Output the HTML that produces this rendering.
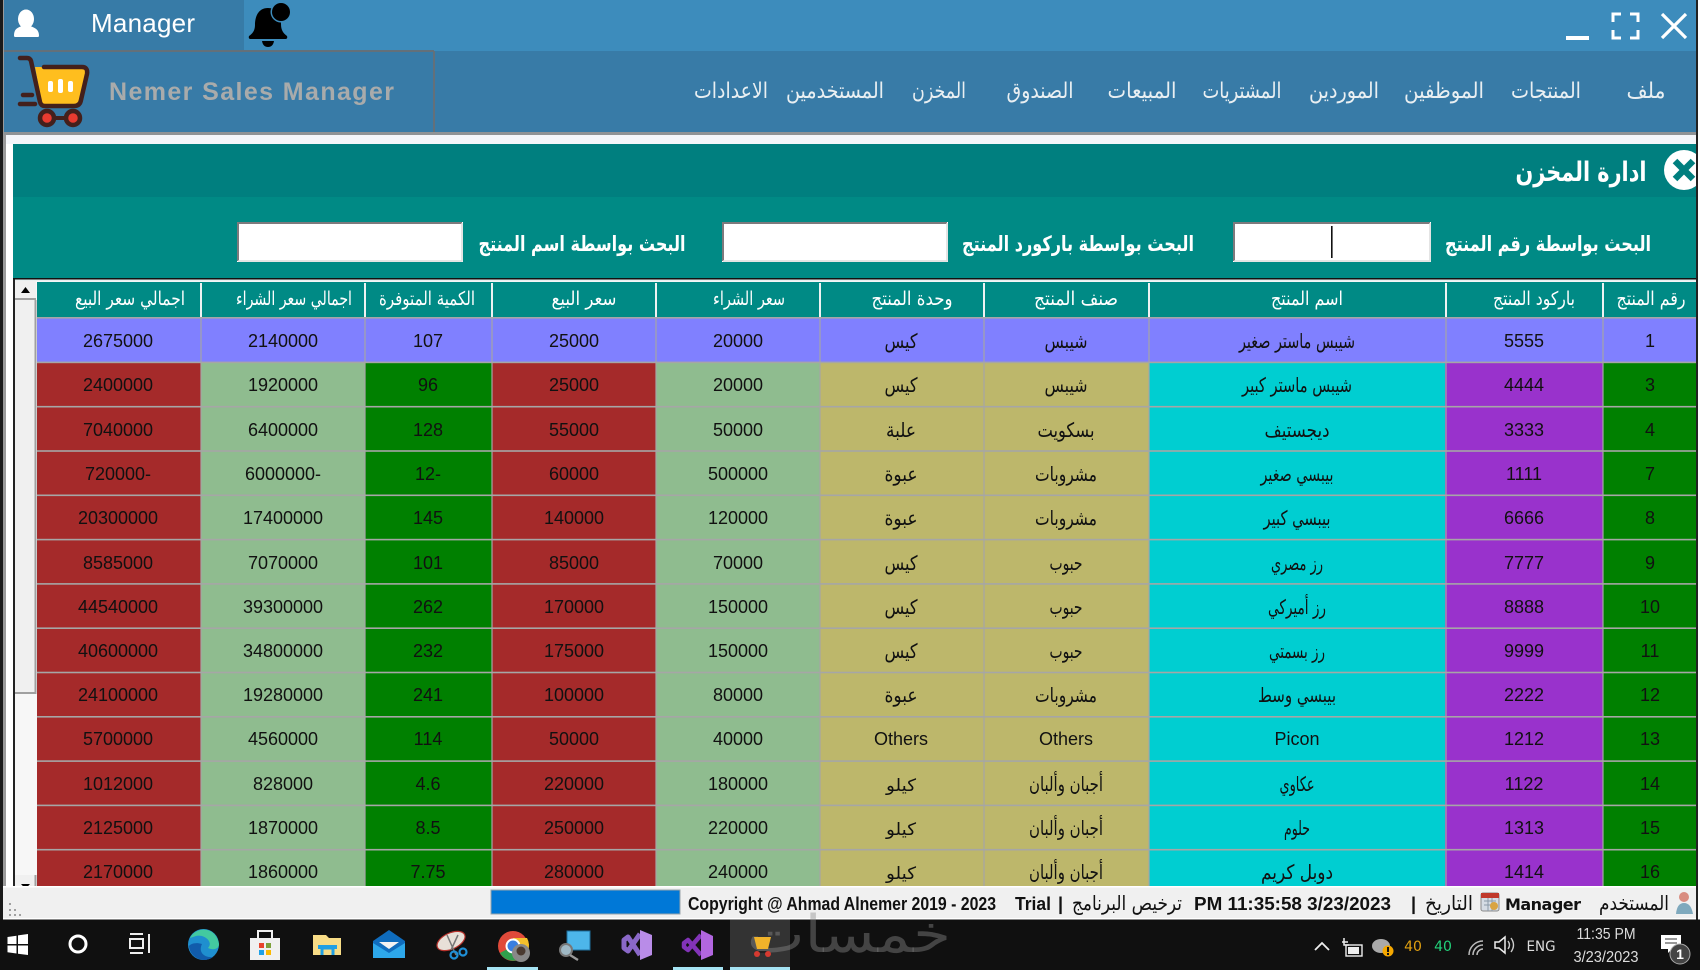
<!DOCTYPE html>
<html lang="ar">
<head>
<meta charset="utf-8">
<title>Nemer Sales Manager</title>
<style>
html,body{margin:0;padding:0;width:1700px;height:970px;overflow:hidden;background:#111}
svg{display:block;filter:blur(.3px)}
text{font-family:"Liberation Sans","DejaVu Sans",sans-serif}
.ar{font-family:"DejaVu Sans",sans-serif;text-anchor:middle}
.m{font-size:22px;fill:#e9eff2}
.l{font-size:21px;fill:#fff;font-weight:bold}
.h{font-size:19px;fill:#fff}
.c{font-size:20px;fill:#111}
.k{font-size:18px}
.d{font-size:18px;fill:#111;text-anchor:middle}
.s{font-size:18px;fill:#111;font-weight:bold}
.t{font-size:16px;fill:#ddd;text-anchor:middle}
</style>
</head>
<body>
<svg xmlns="http://www.w3.org/2000/svg" width="1700" height="970" viewBox="0 0 1700 970">
<!-- window base -->
<rect width="1700" height="970" fill="#fff"/>
<rect x="0" y="0" width="3" height="970" fill="#1a1a1a"/>
<rect x="3" y="0" width="3" height="970" fill="#9a9a9a"/>
<rect x="1696" y="0" width="2" height="970" fill="#222"/>
<!-- top bar -->
<rect x="6" y="0" width="1690" height="51" fill="#3d8cbc"/>
<rect x="4" y="0" width="240" height="50" fill="#377ba7"/>
<rect x="4" y="51" width="1692" height="82" fill="#387ba7"/>
<rect x="4" y="50" width="430" height="2" fill="#63707a"/>
<rect x="433" y="51" width="2" height="82" fill="#63707a"/>
<rect x="4" y="132" width="1692" height="3" fill="#8f9396"/>
<rect x="6" y="135" width="1690" height="9" fill="#f4f6fa"/>
<!-- user icon -->
<g fill="#fff">
<ellipse cx="26" cy="19" rx="8" ry="9.5"/>
<path d="M14 36 C14 30 16 28 22 26 L24 24 H28 L30 26 C36 28 39 30 39 36 Q39 37 37 37 H16 Q14 37 14 36 Z"/>
</g>
<text x="91" y="32" font-size="26" fill="#fff" textLength="104" lengthAdjust="spacing" style="font-family:'Liberation Sans',sans-serif">Manager</text>
<!-- bell -->
<path d="M268 8 C258 8 255 17 255 25 C255 31 252 34 249 36 Q248 39 251 39 H285 Q288 39 287 36 C283 33 281 30 281 24 C281 14 276 8 268 8 Z" fill="#000"/>
<path d="M262 41 H274 Q273 47 268 47 Q263 47 262 41 Z" fill="#000"/>
<circle cx="281" cy="12" r="10.5" fill="#3d8cbc"/>
<circle cx="281" cy="12" r="9" fill="#000"/>
<!-- window controls -->
<rect x="1566" y="36" width="23" height="4" fill="#fff"/>
<path d="M1613 22 V14 H1621 M1630 14 H1638 V22 M1638 30 V38 H1630 M1621 38 H1613 V30" fill="none" stroke="#fff" stroke-width="3"/>
<path d="M1662 14 L1686 38 M1686 14 L1662 38" stroke="#fff" stroke-width="3.2" fill="none"/>
<!-- cart logo -->
<path d="M35 67 H82 Q88 67 87 73 L81 99 Q80 105 74 105 H42 Z" fill="#ffbe1e"/>
<path d="M20 58 H27 Q30 58 31 61 L40 102 Q41 106 45 106 H74 Q80 106 81 100 L87 74 Q88 67 82 67 H44" fill="none" stroke="#43201c" stroke-width="4.5" stroke-linecap="round"/>
<path d="M23 95 H32 M20 104 H35" stroke="#43201c" stroke-width="4.5" stroke-linecap="round"/>
<path d="M47 118 H73" stroke="#43201c" stroke-width="4"/>
<circle cx="47" cy="118" r="7" fill="#e83b30" stroke="#43201c" stroke-width="4.5"/>
<circle cx="73" cy="118" r="7" fill="#e83b30" stroke="#43201c" stroke-width="4.5"/>
<rect x="48" y="81" width="5" height="11" rx="2" fill="#fff"/>
<rect x="58" y="79" width="5" height="14" rx="2" fill="#fff"/>
<rect x="68" y="81" width="5" height="11" rx="2" fill="#fff"/>
<text x="109" y="100" font-size="25" font-weight="bold" fill="#a9abab" textLength="285" lengthAdjust="spacing">Nemer Sales Manager</text>
<!-- menu -->
<g>
<text class="ar m" x="1646" y="98" textLength="39" lengthAdjust="spacingAndGlyphs">ملف</text>
<text class="ar m" x="1546" y="98" textLength="70" lengthAdjust="spacingAndGlyphs">المنتجات</text>
<text class="ar m" x="1444" y="98" textLength="80" lengthAdjust="spacingAndGlyphs">الموظفين</text>
<text class="ar m" x="1344" y="98" textLength="70" lengthAdjust="spacingAndGlyphs">الموردين</text>
<text class="ar m" x="1242" y="98" textLength="79" lengthAdjust="spacingAndGlyphs">المشتريات</text>
<text class="ar m" x="1142" y="98" textLength="69" lengthAdjust="spacingAndGlyphs">المبيعات</text>
<text class="ar m" x="1040" y="98" textLength="67" lengthAdjust="spacingAndGlyphs">الصندوق</text>
<text class="ar m" x="939" y="98" textLength="54" lengthAdjust="spacingAndGlyphs">المخزن</text>
<text class="ar m" x="835" y="98" textLength="98" lengthAdjust="spacingAndGlyphs">المستخدمين</text>
<text class="ar m" x="731" y="98" textLength="74" lengthAdjust="spacingAndGlyphs">الاعدادات</text>
</g>
<!-- teal panel -->
<rect x="13" y="144" width="1683" height="53" fill="#007f7f"/>
<rect x="13" y="197" width="1683" height="81" fill="#008a85"/>
<text class="ar" x="1581" y="181" font-size="27" font-weight="bold" fill="#fff" textLength="131" lengthAdjust="spacingAndGlyphs">ادارة المخزن</text>
<circle cx="1684" cy="170" r="20" fill="#fff"/>
<path d="M1675 161 L1693 179 M1693 161 L1675 179" stroke="#007f7f" stroke-width="6.5"/>
<rect x="1696" y="144" width="4" height="60" fill="#fff"/>
<rect x="1696" y="144" width="2" height="60" fill="#222"/>
<!-- search -->
<g>
<rect x="237" y="222" width="226" height="40" fill="#fff"/>
<path d="M238 261 V223 H462" fill="none" stroke="#7d7a7d" stroke-width="2"/>
<path d="M238 261 H462 V223" fill="none" stroke="#dcdcdc" stroke-width="1.5"/>
<rect x="722" y="222" width="226" height="40" fill="#fff"/>
<path d="M723 261 V223 H947" fill="none" stroke="#7d7a7d" stroke-width="2"/>
<path d="M723 261 H947 V223" fill="none" stroke="#dcdcdc" stroke-width="1.5"/>
<rect x="1233" y="222" width="198" height="40" fill="#fff"/>
<path d="M1234 261 V223 H1430" fill="none" stroke="#7d7a7d" stroke-width="2"/>
<path d="M1234 261 H1430 V223" fill="none" stroke="#dcdcdc" stroke-width="1.5"/>
<rect x="1331" y="226" width="1.6" height="32" fill="#111"/>
</g>
<text class="ar l" x="1548" y="251" textLength="206" lengthAdjust="spacingAndGlyphs">البحث بواسطة رقم المنتج</text>
<text class="ar l" x="1078" y="251" textLength="232" lengthAdjust="spacingAndGlyphs">البحث بواسطة باركورد المنتج</text>
<text class="ar l" x="582" y="251" textLength="207" lengthAdjust="spacingAndGlyphs">البحث بواسطة اسم المنتج</text>
<!-- grid frame -->
<rect x="13" y="278" width="1683" height="1.6" fill="#111"/>
<rect x="13" y="279.6" width="1683" height="2" fill="#e9efef"/>
<rect x="6" y="278" width="7" height="610" fill="#fff"/>
<rect x="13" y="279" width="2" height="608" fill="#222"/>
<!-- scrollbar -->
<rect x="15" y="281" width="22" height="606" fill="#f7f7f7"/>
<rect x="15" y="281" width="21" height="18" fill="#f0f0f0"/>
<rect x="15" y="298" width="21" height="2" fill="#a0a0a0"/>
<path d="M21 293 L25.5 287 L30 293 Z" fill="#000"/>
<rect x="15" y="300" width="21" height="393" fill="#f0f0f0"/>
<rect x="34.5" y="300" width="2" height="394" fill="#a0a0a0"/>
<rect x="15" y="692" width="21.5" height="2" fill="#a0a0a0"/>
<rect x="15" y="875" width="21" height="12" fill="#f0f0f0"/>
<rect x="34.5" y="875" width="2" height="12" fill="#a0a0a0"/>
<path d="M21 884 L30 884 L25.5 889 Z" fill="#000"/>
<!-- header -->
<rect x="37" y="282" width="1659" height="36" fill="#008a85"/>
<g fill="#eef2f2">
<rect x="200" y="283" width="2" height="34"/><rect x="364" y="283" width="2" height="34"/>
<rect x="491" y="283" width="2" height="34"/><rect x="655" y="283" width="2" height="34"/>
<rect x="819" y="283" width="2" height="34"/><rect x="983" y="283" width="2" height="34"/>
<rect x="1148" y="283" width="2" height="34"/><rect x="1445" y="283" width="2" height="34"/>
<rect x="1602" y="283" width="2" height="34"/>
</g>
<text class="ar h" x="130" y="305" textLength="110" lengthAdjust="spacingAndGlyphs">اجمالي سعر البيع</text>
<text class="ar h" x="294" y="305" textLength="116" lengthAdjust="spacingAndGlyphs">اجمالي سعر الشراء</text>
<text class="ar h" x="427" y="305" textLength="96" lengthAdjust="spacingAndGlyphs">الكمية المتوفرة</text>
<text class="ar h" x="584" y="305" textLength="65" lengthAdjust="spacingAndGlyphs">سعر البيع</text>
<text class="ar h" x="749" y="305" textLength="72" lengthAdjust="spacingAndGlyphs">سعر الشراء</text>
<text class="ar h" x="912" y="305" textLength="81" lengthAdjust="spacingAndGlyphs">وحدة المنتج</text>
<text class="ar h" x="1076" y="305" textLength="84" lengthAdjust="spacingAndGlyphs">صنف المنتج</text>
<text class="ar h" x="1307" y="305" textLength="72" lengthAdjust="spacingAndGlyphs">اسم المنتج</text>
<text class="ar h" x="1534" y="305" textLength="82" lengthAdjust="spacingAndGlyphs">باركود المنتج</text>
<text class="ar h" x="1651" y="305" textLength="69" lengthAdjust="spacingAndGlyphs">رقم المنتج</text>
<!-- columns -->
<rect x="37" y="318" width="1659" height="44" fill="#8080ff"/>
<rect x="37" y="362" width="164" height="525" fill="#a52a2a"/>
<rect x="201" y="362" width="164" height="525" fill="#8fbc8f"/>
<rect x="365" y="362" width="127" height="525" fill="#008000"/>
<rect x="492" y="362" width="164" height="525" fill="#a52a2a"/>
<rect x="656" y="362" width="164" height="525" fill="#8fbc8f"/>
<rect x="820" y="362" width="329" height="525" fill="#bdb76b"/>
<rect x="1149" y="362" width="296" height="525" fill="#00ced1"/>
<rect x="1445" y="362" width="158" height="525" fill="#9932cc"/>
<rect x="1603" y="362" width="93" height="525" fill="#008000"/>
<!-- grid lines -->
<g fill="#a6a6a6">
<rect x="37" y="317" width="1659" height="1.6"/><rect x="37" y="361.6" width="1659" height="1.6"/>
<rect x="37" y="405.9" width="1659" height="1.6"/><rect x="37" y="450.2" width="1659" height="1.6"/>
<rect x="37" y="494.5" width="1659" height="1.6"/><rect x="37" y="538.8" width="1659" height="1.6"/>
<rect x="37" y="583.1" width="1659" height="1.6"/><rect x="37" y="627.4" width="1659" height="1.6"/>
<rect x="37" y="671.7" width="1659" height="1.6"/><rect x="37" y="716" width="1659" height="1.6"/>
<rect x="37" y="760.3" width="1659" height="1.6"/><rect x="37" y="804.6" width="1659" height="1.6"/>
<rect x="37" y="848.9" width="1659" height="1.6"/>
<rect x="200.4" y="318" width="1.2" height="569"/><rect x="364.4" y="318" width="1.2" height="569"/>
<rect x="491.4" y="318" width="1.2" height="569"/><rect x="655.4" y="318" width="1.2" height="569"/>
<rect x="819.4" y="318" width="1.2" height="569"/><rect x="983.4" y="318" width="1.2" height="569"/>
<rect x="1148.4" y="318" width="1.2" height="569"/><rect x="1445.4" y="318" width="1.2" height="569"/>
<rect x="1602.4" y="318" width="1.2" height="569"/>
</g>
<!-- rows -->
<g>
<text class="d" x="1650" y="347">1</text><text class="d" x="1524" y="347">5555</text>
<text class="ar c" x="1297" y="348" textLength="116" lengthAdjust="spacingAndGlyphs">شيبس ماستر صغير</text>
<text class="ar c" x="1066" y="348" textLength="43" lengthAdjust="spacingAndGlyphs">شيبس</text>
<text class="ar c" x="901" y="348" textLength="33" lengthAdjust="spacingAndGlyphs">كيس</text>
<text class="d" x="738" y="347">20000</text><text class="d" x="574" y="347">25000</text><text class="d" x="428" y="347">107</text>
<text class="d" x="283" y="347">2140000</text><text class="d" x="118" y="347">2675000</text>
</g>
<g>
<text class="d" x="1650" y="391">3</text><text class="d" x="1524" y="391">4444</text>
<text class="ar c" x="1297" y="392" textLength="110" lengthAdjust="spacingAndGlyphs">شيبس ماستر كبير</text>
<text class="ar c" x="1066" y="392" textLength="43" lengthAdjust="spacingAndGlyphs">شيبس</text>
<text class="ar c" x="901" y="392" textLength="33" lengthAdjust="spacingAndGlyphs">كيس</text>
<text class="d" x="738" y="391">20000</text><text class="d" x="574" y="391">25000</text><text class="d" x="428" y="391">96</text>
<text class="d" x="283" y="391">1920000</text><text class="d" x="118" y="391">2400000</text>
</g>
<g>
<text class="d" x="1650" y="436">4</text><text class="d" x="1524" y="436">3333</text>
<text class="ar c" x="1297" y="437" textLength="65" lengthAdjust="spacingAndGlyphs">ديجستيف</text>
<text class="ar c" x="1066" y="437" textLength="57" lengthAdjust="spacingAndGlyphs">بسكويت</text>
<text class="ar c" x="901" y="437" textLength="30" lengthAdjust="spacingAndGlyphs">علبة</text>
<text class="d" x="738" y="436">50000</text><text class="d" x="574" y="436">55000</text><text class="d" x="428" y="436">128</text>
<text class="d" x="283" y="436">6400000</text><text class="d" x="118" y="436">7040000</text>
</g>
<g>
<text class="d" x="1650" y="480">7</text><text class="d" x="1524" y="480">1111</text>
<text class="ar c" x="1297" y="481" textLength="73" lengthAdjust="spacingAndGlyphs">بيبسي صغير</text>
<text class="ar c" x="1066" y="481" textLength="62" lengthAdjust="spacingAndGlyphs">مشروبات</text>
<text class="ar c" x="901" y="481" textLength="33" lengthAdjust="spacingAndGlyphs">عبوة</text>
<text class="d" x="738" y="480">500000</text><text class="d" x="574" y="480">60000</text><text class="d" x="428" y="480">12-</text>
<text class="d" x="283" y="480">6000000-</text><text class="d" x="118" y="480">720000-</text>
</g>
<g>
<text class="d" x="1650" y="524">8</text><text class="d" x="1524" y="524">6666</text>
<text class="ar c" x="1297" y="525" textLength="67" lengthAdjust="spacingAndGlyphs">بيبسي كبير</text>
<text class="ar c" x="1066" y="525" textLength="62" lengthAdjust="spacingAndGlyphs">مشروبات</text>
<text class="ar c" x="901" y="525" textLength="33" lengthAdjust="spacingAndGlyphs">عبوة</text>
<text class="d" x="738" y="524">120000</text><text class="d" x="574" y="524">140000</text><text class="d" x="428" y="524">145</text>
<text class="d" x="283" y="524">17400000</text><text class="d" x="118" y="524">20300000</text>
</g>
<g>
<text class="d" x="1650" y="569">9</text><text class="d" x="1524" y="569">7777</text>
<text class="ar c" x="1297" y="570" textLength="52" lengthAdjust="spacingAndGlyphs">رز مصري</text>
<text class="ar c" x="1066" y="570" textLength="33" lengthAdjust="spacingAndGlyphs">حبوب</text>
<text class="ar c" x="901" y="570" textLength="33" lengthAdjust="spacingAndGlyphs">كيس</text>
<text class="d" x="738" y="569">70000</text><text class="d" x="574" y="569">85000</text><text class="d" x="428" y="569">101</text>
<text class="d" x="283" y="569">7070000</text><text class="d" x="118" y="569">8585000</text>
</g>
<g>
<text class="d" x="1650" y="613">10</text><text class="d" x="1524" y="613">8888</text>
<text class="ar c" x="1297" y="614" textLength="58" lengthAdjust="spacingAndGlyphs">رز أميركي</text>
<text class="ar c" x="1066" y="614" textLength="33" lengthAdjust="spacingAndGlyphs">حبوب</text>
<text class="ar c" x="901" y="614" textLength="33" lengthAdjust="spacingAndGlyphs">كيس</text>
<text class="d" x="738" y="613">150000</text><text class="d" x="574" y="613">170000</text><text class="d" x="428" y="613">262</text>
<text class="d" x="283" y="613">39300000</text><text class="d" x="118" y="613">44540000</text>
</g>
<g>
<text class="d" x="1650" y="657">11</text><text class="d" x="1524" y="657">9999</text>
<text class="ar c" x="1297" y="658" textLength="56" lengthAdjust="spacingAndGlyphs">رز بسمتي</text>
<text class="ar c" x="1066" y="658" textLength="33" lengthAdjust="spacingAndGlyphs">حبوب</text>
<text class="ar c" x="901" y="658" textLength="33" lengthAdjust="spacingAndGlyphs">كيس</text>
<text class="d" x="738" y="657">150000</text><text class="d" x="574" y="657">175000</text><text class="d" x="428" y="657">232</text>
<text class="d" x="283" y="657">34800000</text><text class="d" x="118" y="657">40600000</text>
</g>
<g>
<text class="d" x="1650" y="701">12</text><text class="d" x="1524" y="701">2222</text>
<text class="ar c" x="1297" y="702" textLength="78" lengthAdjust="spacingAndGlyphs">بيبسي وسط</text>
<text class="ar c" x="1066" y="702" textLength="62" lengthAdjust="spacingAndGlyphs">مشروبات</text>
<text class="ar c" x="901" y="702" textLength="33" lengthAdjust="spacingAndGlyphs">عبوة</text>
<text class="d" x="738" y="701">80000</text><text class="d" x="574" y="701">100000</text><text class="d" x="428" y="701">241</text>
<text class="d" x="283" y="701">19280000</text><text class="d" x="118" y="701">24100000</text>
</g>
<g>
<text class="d" x="1650" y="745">13</text><text class="d" x="1524" y="745">1212</text>
<text class="d" x="1297" y="745">Picon</text>
<text class="d" x="1066" y="745">Others</text>
<text class="d" x="901" y="745">Others</text>
<text class="d" x="738" y="745">40000</text><text class="d" x="574" y="745">50000</text><text class="d" x="428" y="745">114</text>
<text class="d" x="283" y="745">4560000</text><text class="d" x="118" y="745">5700000</text>
</g>
<g>
<text class="d" x="1650" y="790">14</text><text class="d" x="1524" y="790">1122</text>
<text class="ar c" x="1297" y="791" textLength="35" lengthAdjust="spacingAndGlyphs">عكاوي</text>
<text class="ar c" x="1066" y="791" textLength="74" lengthAdjust="spacingAndGlyphs">أجبان وألبان</text>
<text class="ar c k" x="901" y="791" textLength="30" lengthAdjust="spacingAndGlyphs" style="font-size:17px">كيلو</text>
<text class="d" x="738" y="790">180000</text><text class="d" x="574" y="790">220000</text><text class="d" x="428" y="790">4.6</text>
<text class="d" x="283" y="790">828000</text><text class="d" x="118" y="790">1012000</text>
</g>
<g>
<text class="d" x="1650" y="834">15</text><text class="d" x="1524" y="834">1313</text>
<text class="ar c" x="1297" y="835" textLength="26" lengthAdjust="spacingAndGlyphs">حلوم</text>
<text class="ar c" x="1066" y="835" textLength="74" lengthAdjust="spacingAndGlyphs">أجبان وألبان</text>
<text class="ar c k" x="901" y="835" textLength="30" lengthAdjust="spacingAndGlyphs" style="font-size:17px">كيلو</text>
<text class="d" x="738" y="834">220000</text><text class="d" x="574" y="834">250000</text><text class="d" x="428" y="834">8.5</text>
<text class="d" x="283" y="834">1870000</text><text class="d" x="118" y="834">2125000</text>
</g>
<g>
<text class="d" x="1650" y="878">16</text><text class="d" x="1524" y="878">1414</text>
<text class="ar c" x="1297" y="879" textLength="72" lengthAdjust="spacingAndGlyphs">دوبل كريم</text>
<text class="ar c" x="1066" y="879" textLength="74" lengthAdjust="spacingAndGlyphs">أجبان وألبان</text>
<text class="ar c k" x="901" y="879" textLength="30" lengthAdjust="spacingAndGlyphs" style="font-size:17px">كيلو</text>
<text class="d" x="738" y="878">240000</text><text class="d" x="574" y="878">280000</text><text class="d" x="428" y="878">7.75</text>
<text class="d" x="283" y="878">1860000</text><text class="d" x="118" y="878">2170000</text>
</g>
<!-- status bar -->
<rect x="3" y="887" width="1693" height="32" fill="#f0f0f0"/>
<rect x="3" y="886" width="1693" height="1.5" fill="#fff"/>
<rect x="3" y="918" width="1693" height="1.5" fill="#fff"/>
<g fill="#a0a0a0">
<rect x="9" y="903" width="2" height="2"/><rect x="9" y="909" width="2" height="2"/><rect x="14" y="909" width="2" height="2"/>
<rect x="9" y="914" width="2" height="2"/><rect x="14" y="914" width="2" height="2"/><rect x="19" y="914" width="2" height="2"/>
</g>
<rect x="491" y="890" width="189" height="24" fill="#0078d7" stroke="#9aa4aa" stroke-width="1"/>
<text class="s" x="688" y="910" textLength="308" lengthAdjust="spacingAndGlyphs">Copyright @ Ahmad Alnemer 2019 - 2023</text>
<text class="s" x="1015" y="910" textLength="36" lengthAdjust="spacingAndGlyphs">Trial</text>
<text class="s" x="1058" y="910">|</text>
<text class="ar s" x="1127" y="910" textLength="110" lengthAdjust="spacingAndGlyphs" style="font-weight:normal;font-size:20px">ترخيص البرنامج</text>
<text class="s" x="1194" y="910" textLength="197" lengthAdjust="spacingAndGlyphs">PM 11:35:58 3/23/2023</text>
<text class="s" x="1411" y="910">|</text>
<text class="ar s" x="1449" y="910" textLength="48" lengthAdjust="spacingAndGlyphs" style="font-weight:normal;font-size:20px">التاريخ</text>
<g>
<rect x="1481" y="893" width="18" height="18" rx="2" fill="#d5dce4" stroke="#8a8a8a"/>
<rect x="1481" y="893" width="18" height="5" fill="#c0392b"/>
<path d="M1484 901 H1496 M1484 905 H1496 M1488 898 V911 M1492 898 V911" stroke="#8a9aa8" stroke-width="1"/>
<circle cx="1494" cy="906" r="4" fill="#d9a441"/>
</g>
<text class="s" x="1505" y="910" textLength="76" lengthAdjust="spacing" style="font-family:'DejaVu Sans',sans-serif;font-size:16px">Manager</text>
<text class="ar s" x="1634" y="910" textLength="70" lengthAdjust="spacingAndGlyphs" style="font-weight:normal;font-size:20px">المستخدم</text>
<g>
<circle cx="1684" cy="897" r="5" fill="#d98c80"/>
<path d="M1676 914 Q1677 903 1684 903 Q1691 903 1693 914 Z" fill="#7fa9bd"/>
</g>
<!-- taskbar -->
<rect x="0" y="919.5" width="1700" height="50.5" fill="#101010"/>
<rect x="730" y="919.5" width="60" height="50.5" fill="#333"/>
<rect x="487" y="967" width="51" height="3" fill="#a5e3f3"/>
<rect x="673" y="967" width="50" height="3" fill="#a5e3f3"/>
<rect x="730" y="967" width="60" height="3" fill="#a5e3f3"/>
<!-- start -->
<path d="M7.5 937 L16.5 935.7 V944 H7.5 Z M18 935.4 L28 934 V944 H18 Z M7.5 945.5 H16.5 V953.5 L7.5 952.3 Z M18 945.5 H28 V955 L18 953.7 Z" fill="#fff"/>
<circle cx="78" cy="944" r="8" fill="none" stroke="#fff" stroke-width="3"/>
<path d="M130 934 H143 M130 953 H143 M130 939 H143 V948 H130 Z M149 934 V953" fill="none" stroke="#eee" stroke-width="2"/>
<!-- edge -->
<circle cx="203.5" cy="944.5" r="15.5" fill="#1f8fcf"/>
<path d="M190 938 C196 926 216 926 219 944 C219 950 212 950 208 948 C214 942 204 934 196 936 Z" fill="#43c9a0"/>
<path d="M189 946 C190 958 204 964 213 957 C204 958 198 952 202 944 C195 942 191 944 189 946 Z" fill="#115cab"/>
<!-- store -->
<rect x="250" y="938" width="30" height="22" fill="#f0f0f0"/>
<path d="M258 938 V931 H272 V938" fill="none" stroke="#f0f0f0" stroke-width="2"/>
<rect x="259" y="943" width="5" height="5" fill="#e8442c"/><rect x="266" y="943" width="5" height="5" fill="#7da13b"/>
<rect x="259" y="950" width="5" height="5" fill="#1ea0e6"/><rect x="266" y="950" width="5" height="5" fill="#fbb900"/>
<!-- explorer -->
<path d="M313 935 H326 L329 938 H341 V955 H313 Z" fill="#f7dc86"/>
<path d="M322 955 V948 H333 V955" fill="none" stroke="#1f9fe3" stroke-width="3"/>
<rect x="318" y="945" width="19" height="4" fill="#1f9fe3"/>
<!-- mail -->
<path d="M373 941 L389 930 L405 941 V958 H373 Z" fill="#0f6cbd"/>
<path d="M373 943 L389 953 L405 943 V958 H373 Z" fill="#2da7ea"/>
<path d="M379 942 H399 L389 949 Z" fill="#f2f2f2"/>
<!-- snip -->
<ellipse cx="451" cy="941" rx="15" ry="8" transform="rotate(-25 451 941)" fill="#e8e0d8" stroke="#b6322c" stroke-width="1.2"/>
<path d="M447 935 L456 955 M458 935 L451 950" stroke="#777" stroke-width="1.5"/>
<circle cx="454" cy="955" r="3.5" fill="none" stroke="#1f8fd6" stroke-width="2.2"/>
<circle cx="463" cy="952" r="3.5" fill="none" stroke="#1f8fd6" stroke-width="2.2"/>
<!-- chrome -->
<circle cx="513" cy="946" r="15" fill="#e04a3a"/>
<path d="M513 946 L500 953 A15 15 0 0 0 518 960 Z" fill="#2f9f4c"/>
<path d="M513 938 H527 A15 15 0 0 1 518 960 Z" fill="#f5c02c"/>
<circle cx="513" cy="946" r="6.5" fill="#3a7fe0" stroke="#fff" stroke-width="2"/>
<circle cx="521" cy="953" r="9" fill="#888"/>
<circle cx="521" cy="951" r="4.5" fill="#4a3a30"/>
<!-- connect -->
<rect x="567" y="931" width="23" height="19" fill="#4db6ea" stroke="#1e6f9e"/>
<circle cx="566" cy="950" r="6" fill="#9fb8c4" stroke="#777" stroke-width="2"/>
<path d="M570 955 L578 960" stroke="#999" stroke-width="2.4"/>
<!-- VS -->
<path d="M640 934 L628 951 L624 948 V940 L628 937 L640 955" fill="none" stroke="#8a68c8" stroke-width="5" stroke-linejoin="round"/>
<path d="M640 930 L652 935 V955 L640 960 Z" fill="#b98ce8"/>
<path d="M701 935 L688 950 L684 947 V943 L688 940 L701 955" fill="none" stroke="#8233b8" stroke-width="4.5" stroke-linejoin="round"/>
<path d="M701 930 L713 936 V955 L701 960 Z" fill="#b266e0"/>
<!-- watermark -->
<text class="ar" x="849" y="952" font-size="52" fill="#8c8c8c" fill-opacity=".42" textLength="204" lengthAdjust="spacingAndGlyphs">خمسات</text>
<!-- mini cart -->
<path d="M754 937 H771 L768 949 H757 Z" fill="#f0b32a"/>
<path d="M757 952 H768" stroke="#222" stroke-width="2"/>
<circle cx="757" cy="954" r="3" fill="#d63a30"/><circle cx="768" cy="954" r="3" fill="#d63a30"/>
<!-- tray -->
<path d="M1315 950 L1322 943 L1329 950" fill="none" stroke="#eee" stroke-width="1.8"/>
<rect x="1346" y="945" width="16" height="11" fill="#111" stroke="#eee" stroke-width="1.4"/>
<rect x="1348" y="947" width="11" height="7" fill="#eee"/>
<path d="M1344 938 V945 H1349 M1342 942 H1348" stroke="#eee" stroke-width="1.5" fill="none"/>
<ellipse cx="1381" cy="946" rx="9" ry="7" fill="#aaa"/>
<circle cx="1388" cy="951" r="5.5" fill="#f5a800"/>
<rect x="1387" y="947" width="2" height="5" fill="#111"/><rect x="1387" y="953" width="2" height="2" fill="#111"/>
<text x="1413" y="951" font-size="14" fill="#e0a010" text-anchor="middle" style="font-family:'DejaVu Sans',sans-serif">40</text>
<text x="1443" y="951" font-size="14" fill="#22d27a" text-anchor="middle" style="font-family:'DejaVu Sans',sans-serif">40</text>
<g fill="none" stroke="#bbb" stroke-width="1.5">
<path d="M1469 955 A14 14 0 0 1 1483 941"/><path d="M1473 955 A10 10 0 0 1 1483 945"/><path d="M1477 955 A6 6 0 0 1 1483 949"/>
</g>
<path d="M1495 942 H1499 L1505 937 V953 L1499 948 H1495 Z" fill="none" stroke="#eee" stroke-width="1.5"/>
<path d="M1508 941 Q1511 945 1508 949 M1511 938 Q1516 945 1511 952" fill="none" stroke="#ccc" stroke-width="1.4"/>
<text class="t" x="1541" y="951" textLength="29" lengthAdjust="spacingAndGlyphs" style="font-family:'DejaVu Sans',sans-serif;font-size:14px">ENG</text>
<text class="t" x="1606" y="939" textLength="59" lengthAdjust="spacingAndGlyphs">11:35 PM</text>
<text class="t" x="1606" y="962" textLength="65" lengthAdjust="spacingAndGlyphs">3/23/2023</text>
<path d="M1661 935 H1681 V949 H1672 L1668 953 V949 H1661 Z" fill="#fff"/>
<path d="M1665 939 H1677 M1665 943 H1677" stroke="#333" stroke-width="1"/>
<circle cx="1680" cy="954" r="10" fill="#444" stroke="#aaa" stroke-width="1"/>
<text x="1680" y="959" font-size="14" font-weight="bold" fill="#fff" text-anchor="middle">1</text>
</svg>
</body>
</html>
